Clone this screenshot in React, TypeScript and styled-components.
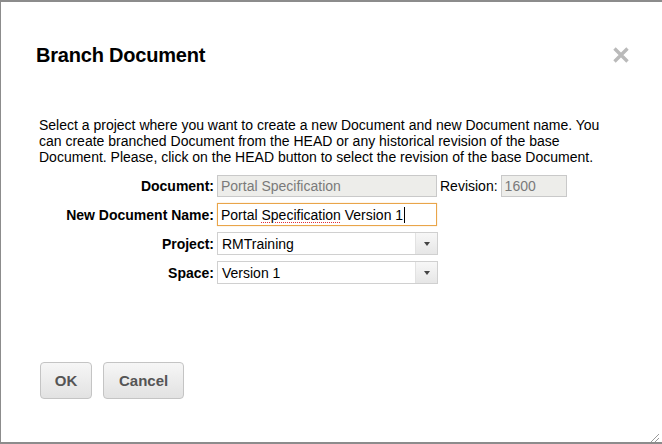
import React from 'react'
import styled, { createGlobalStyle } from 'styled-components'

const GlobalStyle = createGlobalStyle`
html, body {
margin: 0;
padding: 0;
background: #ffffff;
}
body {
font-family: "Liberation Sans", Arial, sans-serif;
}
`

const App = () => {
    return (
        <>
            <GlobalStyle />
            <Dialog>
                <Header>
                    <Title>Branch Document</Title>
                    <Close aria-label="close">
                        <svg width="16" height="16" viewBox="0 0 16 16">
                            <path d="M1.5 1.5 L14.5 14.5 M14.5 1.5 L1.5 14.5" stroke="#bababa" strokeWidth="3.4" strokeLinecap="butt" />
                        </svg>
                    </Close>
                </Header>
                <Body>
                    <Intro>
                        Select a project where you want to create a new Document and new Document name. You can create branched Document from the HEAD or any historical revision of the base Document. Please, click on the HEAD button to select the revision of the base Document.
                    </Intro>
                    <Form>
                        <Label>Document:</Label>
                        <FieldLine>
                            <TextBox value="Portal Specification" readOnly disabledLook width={220} />
                            <RevLabel>Revision:</RevLabel>
                            <TextBox value="1600" readOnly disabledLook width={66} />
                        </FieldLine>

                        <Label>New Document Name:</Label>
                        <FieldLine>
                            <FocusBox>
                                Portal <Squiggle>Specification</Squiggle> Version 1<Caret />
                            </FocusBox>
                        </FieldLine>

                        <Label>Project:</Label>
                        <FieldLine>
                            <Select>
                                <SelectValue>RMTraining</SelectValue>
                                <SelectArrow><Tri /></SelectArrow>
                            </Select>
                        </FieldLine>

                        <Label>Space:</Label>
                        <FieldLine>
                            <Select>
                                <SelectValue>Version 1</SelectValue>
                                <SelectArrow><Tri /></SelectArrow>
                            </Select>
                        </FieldLine>
                    </Form>
                </Body>
                <Footer>
                    <Button>OK</Button>
                    <Button>Cancel</Button>
                </Footer>
                <Grip>
                    <svg width="12" height="12" viewBox="0 0 12 12">
                        <path d="M11 3 L3 11 M11 7 L7 11" stroke="#9a9a9a" strokeWidth="1" />
                    </svg>
                </Grip>
            </Dialog>
        </>
    )
}

export default App

const Dialog = styled.div`
position: relative;
box-sizing: border-box;
width: 662px;
height: 444px;
border-top: 2px solid #8c8c8c;
border-left: 1px solid #8c8c8c;
border-bottom: 2px solid #8c8c8c;
background: #fff;
display: flex;
flex-direction: column;
color: #000;
`

const Header = styled.div`
display: flex;
align-items: center;
justify-content: space-between;
padding: 38px 33px 0 35px;
height: 30px;
`

const Title = styled.h1`
margin: 0;
font-size: 20px;
font-weight: bold;
letter-spacing: -0.2px;
`

const Close = styled.div`
width: 16px;
height: 16px;
display: flex;
`

const Body = styled.div`
padding: 47px 0 0 38px;
flex: 1;
`

const Intro = styled.p`
margin: 0;
width: 585px;
font-size: 14px;
line-height: 16px;
`

const Form = styled.div`
display: grid;
grid-template-columns: 175px auto;
column-gap: 3px;
row-gap: 6px;
margin-top: 10px;
align-items: center;
`

const Label = styled.div`
text-align: right;
font-size: 14px;
font-weight: bold;
`

const FieldLine = styled.div`
display: flex;
align-items: center;
`

const TextBox = styled.input<{ disabledLook?: boolean; width: number }>`
box-sizing: border-box;
width: ${({ width }) => width}px;
height: 22px;
padding: 0 3px;
border: 1px solid #c9c9c9;
background: ${({ disabledLook }) => disabledLook ? "#ededea" : "#fff"};
color: ${({ disabledLook }) => disabledLook ? "#7a7a7a" : "#000"};
font-family: "Liberation Sans", Arial, sans-serif;
font-size: 14px;
outline: none;
margin: 0;
`

const RevLabel = styled.span`
font-size: 14px;
margin: 0 3px 0 3px;
`

const FocusBox = styled.div`
box-sizing: border-box;
width: 220px;
height: 23px;
padding: 0 3px;
border: 1px solid #e9a54a;
box-shadow: 0 0 1px #f3c98f;
display: flex;
align-items: center;
font-size: 14px;
white-space: pre;
`

const Squiggle = styled.span`
text-decoration: underline dotted #e0303a;
text-decoration-thickness: 1px;
text-underline-offset: 2px;
`

const Caret = styled.span`
display: inline-block;
width: 1px;
height: 16px;
background: #000;
margin-left: 1px;
`

const Select = styled.div`
box-sizing: border-box;
width: 221px;
height: 23px;
border: 1px solid #d0d0d0;
display: flex;
align-items: stretch;
background: #fff;
`

const SelectValue = styled.div`
flex: 1;
display: flex;
align-items: center;
padding-left: 4px;
font-size: 14px;
`

const SelectArrow = styled.div`
width: 21px;
border-left: 1px solid #e2e2e2;
background: linear-gradient(#f7f7f7, #e6e6e6);
display: flex;
align-items: center;
justify-content: center;
`

const Tri = styled.span`
width: 0;
height: 0;
border-left: 3px solid transparent;
border-right: 3px solid transparent;
border-top: 4px solid #444;
`

const Footer = styled.div`
display: flex;
gap: 11px;
padding: 0 0 43px 39px;
`

const Button = styled.button`
box-sizing: border-box;
height: 37px;
padding: 0 15px;
border: 1px solid #c4c4c4;
border-radius: 4px;
background: linear-gradient(#f6f6f6, #e2e2e2);
color: #555;
font-family: "Liberation Sans", Arial, sans-serif;
font-size: 15px;
font-weight: bold;
&:first-child {
  width: 52px;
  padding: 0;
}
`

const Grip = styled.div`
position: absolute;
right: 2px;
bottom: 1px;
width: 12px;
height: 12px;
`
